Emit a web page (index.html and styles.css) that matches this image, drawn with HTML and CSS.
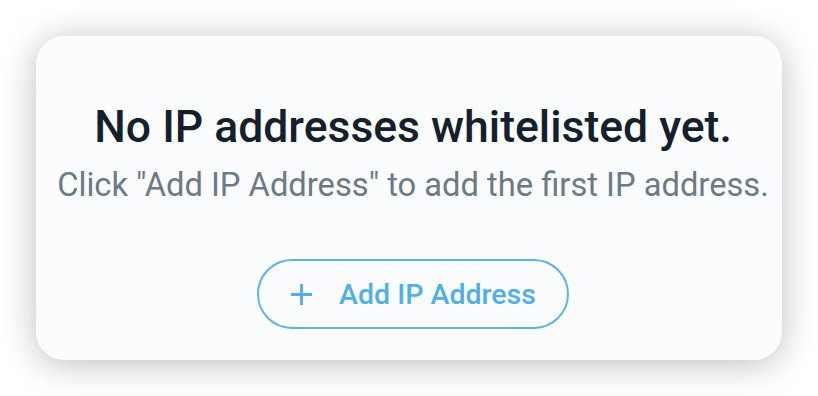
FILE: index.html
```html
<!DOCTYPE html>
<html lang="en">
<head>
  <meta charset="UTF-8" />
  <meta name="viewport" content="width=device-width, initial-scale=1.0" />
  <title>IP Whitelist</title>
  <link rel="stylesheet" href="styles.css">
</head>
<body>
  <div class="card">
    <h2 class="empty-title">No IP addresses whitelisted yet.</h2>
    <p class="empty-text">Click "Add IP Address" to add the first IP address.</p>
    <button class="add-btn">
      <svg class="plus" viewBox="0 0 24 24" width="24" height="24">
        <path d="M12 1v22M1 12h22" stroke="currentColor" stroke-width="3" fill="none" />
      </svg>
      <span>Add IP Address</span>
    </button>
  </div>
</body>
</html>
```

FILE: styles.css
```css
html, body {
  height: 100%;
}
body {
  margin: 0;
  padding: 36px;
  box-sizing: border-box;
  background-color: #ffffff;
  font-family: Roboto, "Liberation Sans", sans-serif;
}
.card {
  height: 324px;
  box-sizing: border-box;
  background-color: #fbfcfd;
  border-radius: 28px;
  box-shadow: 0 4px 36px rgba(0, 0, 0, 0.26);
  padding: 65px 0 0 8px;
  display: flex;
  flex-direction: column;
  align-items: center;
  text-align: center;
}
.empty-title {
  margin: 0;
  font-size: 44.5px;
  line-height: 52px;
  font-weight: 500;
  color: #14202b;
  white-space: nowrap;
}
.empty-text {
  margin: 12px 0 0;
  font-size: 32.7px;
  line-height: 40px;
  color: #6b7a87;
  white-space: nowrap;
}
.add-btn {
  margin-top: 54px;
  width: 312px;
  height: 70px;
  box-sizing: border-box;
  border: 2px solid #5ab4ea;
  border-radius: 35px;
  background: transparent;
  color: #4fb0e9;
  font-family: inherit;
  font-size: 28.5px;
  font-weight: 500;
  display: flex;
  align-items: center;
  justify-content: center;
  gap: 26px;
  padding: 0;
}
.plus {
  width: 23px;
  height: 23px;
}
```
